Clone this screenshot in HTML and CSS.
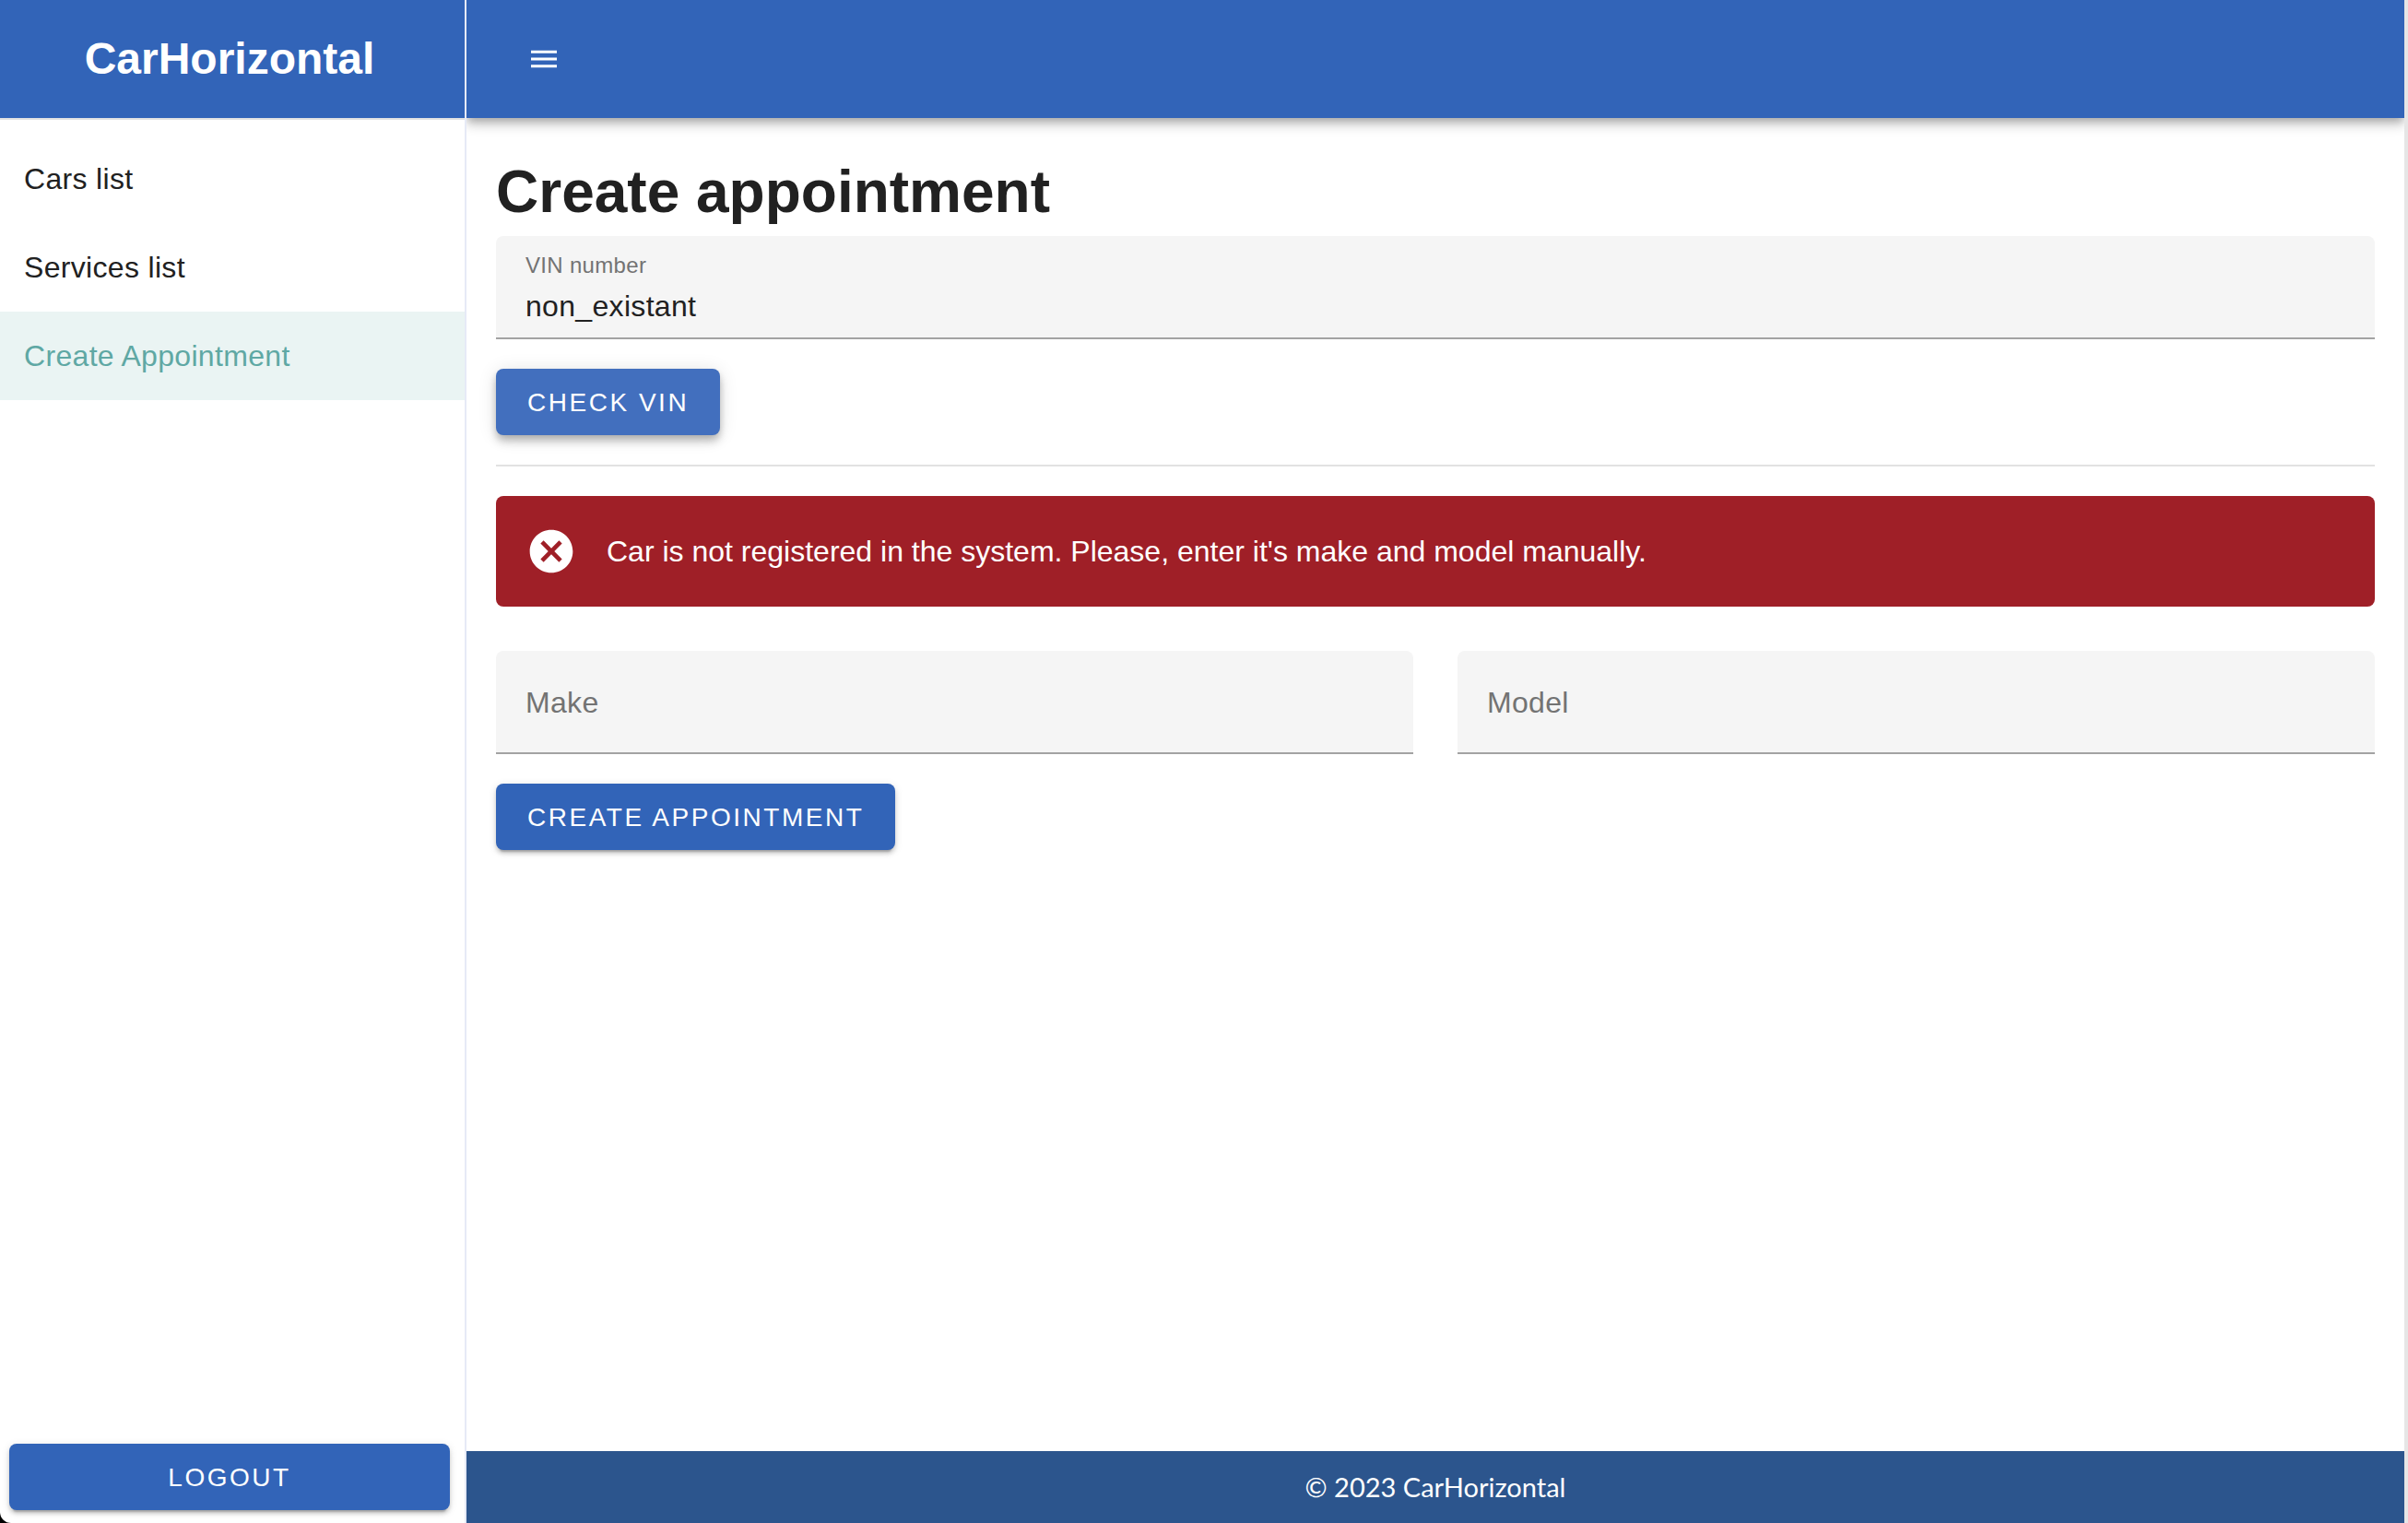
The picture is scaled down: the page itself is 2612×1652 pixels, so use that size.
FILE: index.html
```html
<!DOCTYPE html>
<html lang="en">
<head>
<meta charset="utf-8">
<title>CarHorizontal</title>
<link rel="stylesheet" href="styles.css">
</head>
<body>
<div class="app">
  <aside class="sidebar">
    <div class="brand">CarHorizontal</div>
    <nav class="nav">
      <a class="nav-item" href="#cars">Cars list</a>
      <a class="nav-item" href="#services">Services list</a>
      <a class="nav-item nav-item-active" href="#appointment" aria-current="page">Create Appointment</a>
    </nav>
    <div class="sidebar-footer">
      <button class="button button-wide" type="button">LOGOUT</button>
    </div>
  </aside>
  <div class="page">
    <header class="topbar">
      <button class="menu-button" type="button" aria-label="Toggle menu">
        <svg class="menu-icon" viewBox="3 6 18 12"><path fill="currentColor" d="M3 18h18v-2H3v2zm0-5h18v-2H3v2zm0-7v2h18V6H3z"/></svg>
      </button>
    </header>
    <main class="content">
      <h1 class="title">Create appointment</h1>
      <form class="form">
        <div class="field field-filled">
          <label class="field-label" for="vin">VIN number</label>
          <input class="field-input" id="vin" type="text" value="non_existant">
        </div>
        <button class="button button-hover" type="button">CHECK VIN</button>
      </form>
      <hr class="divider">
      <div class="alert" role="alert">
        <svg class="alert-icon" viewBox="0 0 24 24"><path fill="currentColor" d="M12 2C6.47 2 2 6.47 2 12s4.47 10 10 10 10-4.47 10-10S17.53 2 12 2zm5 13.59L15.59 17 12 13.41 8.41 17 7 15.59 10.59 12 7 8.41 8.41 7 12 10.59 15.59 7 17 8.41 13.41 12 17 15.59z"/></svg>
        <span>Car is not registered in the system. Please, enter it's make and model manually.</span>
      </div>
      <form class="form">
        <div class="columns">
          <div class="field">
            <label class="field-label" for="make">Make</label>
            <input class="field-input" id="make" type="text">
          </div>
          <div class="field">
            <label class="field-label" for="model">Model</label>
            <input class="field-input" id="model" type="text">
          </div>
        </div>
        <button class="button" type="button">CREATE APPOINTMENT</button>
      </form>
    </main>
    <footer class="footer">© 2023 CarHorizontal</footer>
  </div>
</div>
</body>
</html>
```
FILE: styles.css
```css
* {
  box-sizing: border-box;
}

body {
  margin: 0;
  background: #000;
  color: #212121;
  font-family: "Liberation Sans", Arial, sans-serif;
  font-size: 32px;
  letter-spacing: 0.01em;
}

.app {
  display: flex;
  min-height: 100vh;
  background: #fff;
  border-right: 4px solid #e6e6e6;
  border-bottom-left-radius: 12px;
}

/* Sidebar */
.sidebar {
  display: flex;
  flex-direction: column;
  flex: none;
  width: 506px;
  border-right: 2px solid #e6eaf6;
}

.brand {
  height: 130px;
  padding-right: 6px;
  border-bottom: 2px solid #e2e2e2;
  background: #3264b8;
  background-clip: padding-box;
  color: #fff;
  font-size: 48px;
  font-weight: 700;
  letter-spacing: 0;
  line-height: 128px;
  text-align: center;
}

.nav {
  display: flex;
  flex-direction: column;
  padding: 16px 0;
}

.nav-item {
  padding: 0 26px;
  color: inherit;
  line-height: 96px;
  text-decoration: none;
}

.nav-item-active {
  background: #eaf4f3;
  color: #5fa8a4;
}

.sidebar-footer {
  display: flex;
  margin-top: auto;
  padding: 14px 16px 14px 10px;
}

/* Page */
.page {
  display: flex;
  flex: 1;
  flex-direction: column;
  min-width: 0;
}

.topbar {
  display: flex;
  align-items: center;
  height: 128px;
  padding: 0 36px;
  background: #3264b8;
  box-shadow: 0 4px 8px -2px rgba(0, 0, 0, 0.2), 0 8px 10px rgba(0, 0, 0, 0.14), 0 2px 20px rgba(0, 0, 0, 0.12);
  clip-path: inset(0 0 -40px 0);
}

.menu-button {
  display: flex;
  align-items: center;
  justify-content: center;
  width: 96px;
  height: 96px;
  padding: 0;
  border: 0;
  background: none;
  color: #fff;
}

.menu-icon {
  width: 28px;
  height: 20px;
}

.content {
  flex: 1;
  padding: 32px;
}

.title {
  margin: 0;
  font-size: 64px;
  letter-spacing: 0;
  line-height: 96px;
}

.form {
  display: flex;
  flex-direction: column;
  align-items: flex-start;
  gap: 32px;
}

.field {
  display: flex;
  position: relative;
  width: 100%;
  height: 112px;
  border-bottom: 2px solid #a3a3a3;
  border-radius: 8px 8px 0 0;
  background: #f5f5f5;
}

.field-label {
  position: absolute;
  left: 32px;
  color: #737373;
  line-height: 112px;
  pointer-events: none;
}

.field-filled .field-label {
  top: 16px;
  font-size: 24px;
  line-height: 32px;
}

.field-input {
  width: 100%;
  padding: 42px 32px 0;
  border: 0;
  outline: 0;
  background: none;
  color: inherit;
  font: inherit;
  letter-spacing: inherit;
}

.button {
  height: 72px;
  padding: 2px 34px 0;
  border: 0;
  border-radius: 8px;
  background: #3264b8;
  box-shadow: 0 6px 2px -4px rgba(0, 0, 0, 0.2), 0 4px 4px rgba(0, 0, 0, 0.14), 0 2px 10px rgba(0, 0, 0, 0.12);
  color: #fff;
  font-family: inherit;
  font-size: 28px;
  letter-spacing: 0.09em;
}

.button-hover {
  background: #426fbe;
  box-shadow: 0 4px 8px -2px rgba(0, 0, 0, 0.2), 0 8px 10px rgba(0, 0, 0, 0.14), 0 2px 20px rgba(0, 0, 0, 0.12);
}

.button-wide {
  width: 100%;
}

.divider {
  height: 2px;
  margin: 32px 0;
  border: 0;
  background: #e2e2e2;
}

.alert {
  display: flex;
  align-items: center;
  gap: 32px;
  margin-bottom: 48px;
  padding: 32px;
  border-radius: 8px;
  background: #9f1f27;
  color: #fff;
  letter-spacing: 0;
}

.alert-icon {
  flex: none;
  width: 56px;
  height: 56px;
}

.columns {
  display: grid;
  grid-template-columns: 1fr 1fr;
  gap: 48px;
  width: 100%;
}

.footer {
  background: #2c558d;
  color: #fff;
  font-family: Lato, sans-serif;
  font-size: 29px;
  letter-spacing: 0;
  line-height: 78px;
  text-align: center;
}
```
